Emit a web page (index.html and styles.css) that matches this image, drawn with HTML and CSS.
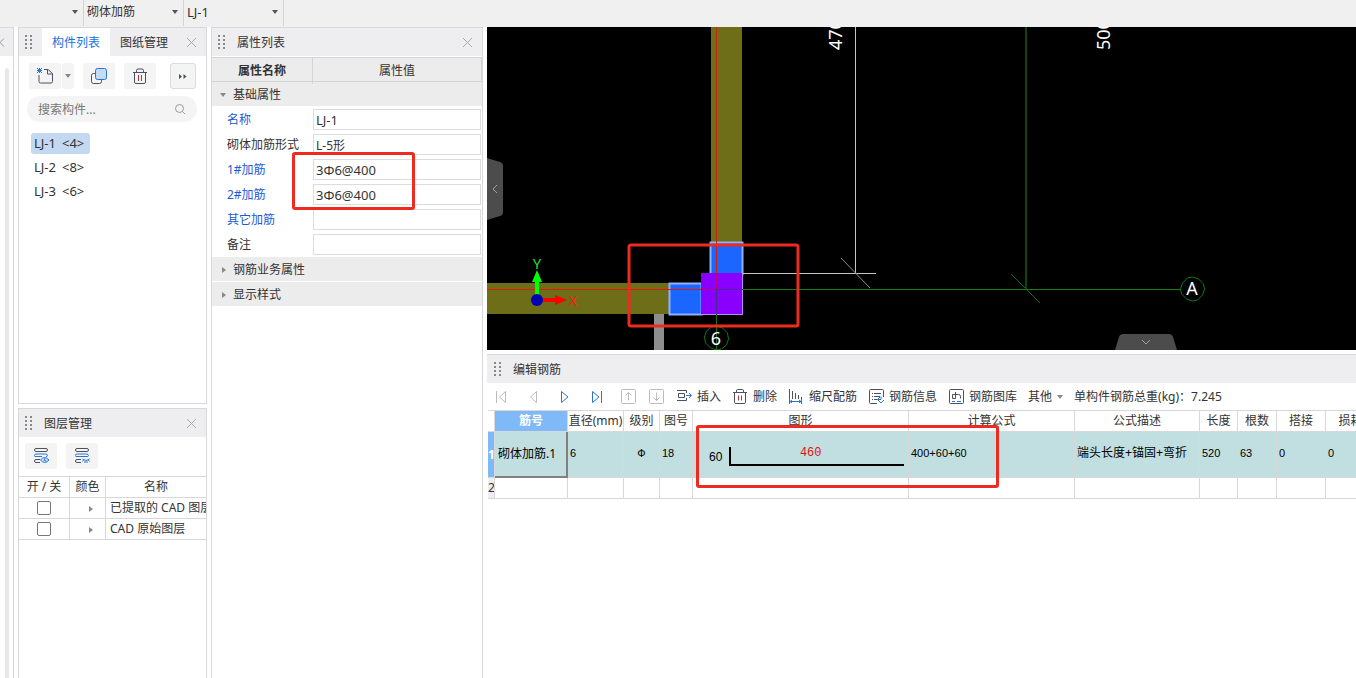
FILE: index.html
```html
<!DOCTYPE html>
<html lang="zh-CN">
<head>
    <meta charset="UTF-8">
    <meta name="viewport" content="width=device-width, initial-scale=1.0">
    <title>砌体加筋</title>
    <link rel="stylesheet" href="styles.css">
</head>
<body>
    <header class="topbar">
        <div class="picker"><select aria-label="楼层"><option></option></select></div>
        <div class="picker"><select aria-label="构件类型"><option>砌体加筋</option></select></div>
        <div class="picker"><select class="latin" aria-label="构件"><option>LJ-1</option></select></div>
    </header>

    <div class="workspace">
        <aside class="edge">
            <div class="edge-head">
                <svg width="5" height="9" viewBox="0 0 5 9"><path d="M-4 0.5L0 4.5L-4 8.5M4 0.5L0 4.5L4 8.5" /></svg>
            </div>
            <div class="edge-scroll"></div>
        </aside>

        <div class="side">
            <section class="panel components">
                <div class="panel-head">
                    <span class="grip"></span>
                    <button class="tab active" type="button">构件列表</button>
                    <button class="tab" type="button">图纸管理</button>
                    <button class="close" type="button" aria-label="关闭"></button>
                </div>
                <div class="component-tools">
                    <div class="split">
                        <button class="tool" type="button" aria-label="新建">
                            <svg width="18" height="18" viewBox="0 0 18 18"><path class="dark" d="M8 2.500h4l4.500 4v8q0 1.500-1.500 1.500h-10.500q-1.500 0-1.500-1.500V8M11.500 2.500V7h5" /><path class="blue" d="M1 1l5 5M6 1l-5 5M3.500 1v5M1 3.500h5" /></svg>
                        </button>
                        <button class="tool drop" type="button" aria-label="新建选项"><i class="caret"></i></button>
                    </div>
                    <button class="tool" type="button" aria-label="复制">
                        <svg width="18" height="18" viewBox="0 0 18 18"><rect class="dark" x="1.500" y="6.500" width="10" height="10" rx="2" /><rect class="blue fill" x="5.500" y="1.500" width="11" height="11" rx="2" /></svg>
                    </button>
                    <button class="tool" type="button" aria-label="删除">
                        <svg width="18" height="18" viewBox="0 0 18 18"><path class="dark" d="M2 5.500h14M5.500 5V3.500q0-1.500 1.500-1.500h4q1.500 0 1.500 1.500V5M3.500 6v9q0 1.500 1.500 1.500h8q1.500 0 1.500-1.500V6" /><path class="red" d="M7.500 8v6M10.500 8v6" /></svg>
                    </button>
                    <button class="tool more" type="button" aria-label="更多">
                        <svg width="10" height="8" viewBox="0 0 10 8"><path class="solid" d="M1 2l3 2.500-3 2.500zM5.500 2l3 2.500-3 2.500z" /></svg>
                    </button>
                </div>
                <div class="search">
                    <input type="text" placeholder="搜索构件..." aria-label="搜索构件">
                    <svg width="12" height="12" viewBox="0 0 12 12"><circle cx="5.500" cy="5.500" r="4" /><path d="M8.500 8.500l2.500 2.500" /></svg>
                </div>
                <ul class="component-list">
                    <li class="selected"><span>LJ-1</span> <span>&lt;4&gt;</span></li>
                    <li><span>LJ-2</span> <span>&lt;8&gt;</span></li>
                    <li><span>LJ-3</span> <span>&lt;6&gt;</span></li>
                </ul>
            </section>

            <section class="panel layers">
                <div class="panel-head">
                    <span class="grip"></span>
                    <h2>图层管理</h2>
                    <button class="close" type="button" aria-label="关闭"></button>
                </div>
                <div class="layer-tools">
                    <button class="tool" type="button" aria-label="显示图层">
                        <svg width="18" height="18" viewBox="0 0 18 18"><path class="dark" d="M4 1.500h10q1.500 0 1.500 1.500t-1.500 1.500H4Q2.500 4.500 2.500 3T4 1.500M8 12.500H4q-1.500 0-1.500 1.500t1.500 1.500h4" /><path class="blue" d="M14 9.500q1.500 0 1.500-1T14 7H4Q2.500 7 2.500 8.500T4 9.500h6" /><path class="blue fill" d="M8.500 13q4-5 8.500 0q-4.500 5-8.500 0z" /><path class="blue" d="M12.500 11.500v2h1.500" /></svg>
                    </button>
                    <button class="tool" type="button" aria-label="隐藏图层">
                        <svg width="18" height="18" viewBox="0 0 18 18"><path class="dark" d="M4 1.500h10q1.500 0 1.500 1.500t-1.500 1.500H4Q2.500 4.500 2.500 3T4 1.500M8 12.500H4q-1.500 0-1.500 1.500t1.500 1.500h4" /><path class="blue" d="M14 9.500q1.500 0 1.500-1T14 7H4Q2.500 7 2.500 8.500T4 9.500zM9.500 12q3.500 3 7 0M10.500 13l-1 1.500M12 14v2M14 14v2M15.500 13l1 1.500" /></svg>
                    </button>
                </div>
                <div class="layer-wrap">
                    <table class="layer-table">
                        <colgroup><col class="c-on"><col class="c-color"><col></colgroup>
                        <thead>
                            <tr><th>开 / 关</th><th>颜色</th><th>名称</th></tr>
                        </thead>
                        <tbody>
                            <tr>
                                <td><input type="checkbox" aria-label="已提取的 CAD 图层"></td>
                                <td><i class="caret right"></i></td>
                                <td>已提取的 CAD 图层</td>
                            </tr>
                            <tr>
                                <td><input type="checkbox" aria-label="CAD 原始图层"></td>
                                <td><i class="caret right"></i></td>
                                <td>CAD 原始图层</td>
                            </tr>
                        </tbody>
                    </table>
                </div>
            </section>
        </div>

        <section class="panel props">
            <div class="panel-head">
                <span class="grip"></span>
                <h2>属性列表</h2>
                <button class="close" type="button" aria-label="关闭"></button>
            </div>
            <div class="prop-titles"><strong>属性名称</strong><span>属性值</span></div>
            <div class="prop-group"><i class="caret"></i>基础属性</div>
            <div class="prop key"><label for="p-name">名称</label><input class="latin" type="text" id="p-name" value="LJ-1"></div>
            <div class="prop"><label for="p-shape">砌体加筋形式</label><input type="text" id="p-shape" value="L-5形"></div>
            <div class="prop key"><label for="p-bar1">1#加筋</label><input class="latin" type="text" id="p-bar1" value="3Φ6@400"></div>
            <div class="prop key"><label for="p-bar2">2#加筋</label><input class="latin" type="text" id="p-bar2" value="3Φ6@400"></div>
            <div class="prop key"><label for="p-other">其它加筋</label><input type="text" id="p-other"></div>
            <div class="prop"><label for="p-note">备注</label><input type="text" id="p-note"></div>
            <div class="prop-group"><i class="caret right"></i>钢筋业务属性</div>
            <div class="prop-group"><i class="caret right"></i>显示样式</div>
            <div class="mark mark-props"></div>
        </section>

        <main class="main">
            <div class="canvas">
                <svg class="drawing" width="100%" height="100%">
                    <!-- walls -->
                    <rect x="224" y="0" width="31" height="216" fill="#6f6e18" />
                    <rect x="0" y="256" width="183" height="31" fill="#6f6e18" />
                    <rect x="167" y="287" width="10" height="36" fill="#8e8e8e" />
                    <!-- column and reinforcement -->
                    <rect x="223.500" y="215.500" width="32" height="32" fill="#1a66ff" stroke="#8fb2ff" stroke-width="2" />
                    <rect x="182.500" y="256.500" width="32" height="31" fill="#1a66ff" stroke="#8fb2ff" stroke-width="2" />
                    <rect x="214" y="246" width="42" height="42" fill="#8a00ff" />
                    <path d="M255.500 246V287.500H214" fill="none" stroke="#b48cff" />
                    <!-- axes -->
                    <rect x="229" y="0" width="1" height="246" fill="#d02010" />
                    <rect x="0" y="262" width="214" height="1" fill="#e01808" />
                    <path d="M229.500 246V262.500H214" stroke="#b8007a" fill="none" />
                    <path d="M229.500 262V288M229 262.500H256" stroke="#4b2a90" fill="none" />
                    <rect x="256" y="262" width="437" height="1" fill="#148014" />
                    <path d="M229.500 288V323M524 247L553 276" stroke="#147014" fill="none" />
                    <path d="M539 0V262" stroke="#154015" stroke-width="2" />
                    <path d="M256 246.500H389M368.500 0V246" stroke="#c4c4c4" fill="none" />
                    <path d="M354 231L383 261" stroke="#8c8c8c" />
                    <path d="M229.500 299l6 2 5 5 1 6-2 6-5 4-5 1-6-2-5-5-1-6 2-6 5-4z" fill="none" stroke="#147814" />
                    <path d="M705.500 250l6 2 5 5 1 5-2 6-5 5-5 1-6-2-5-5-1-5 2-6 5-5z" fill="none" stroke="#147814" />
                    <text class="axis" x="229" y="318" text-anchor="middle">6</text>
                    <text class="axis" x="705" y="268" text-anchor="middle">A</text>
                    <text class="axis" transform="translate(355 23) rotate(-90)">4700</text>
                    <text class="axis" transform="translate(623 23) rotate(-90)">5000</text>
                    <!-- coordinate arrows -->
                    <path d="M50 270V254" stroke="#00ff00" stroke-width="4" />
                    <path d="M45 255L50 243L55 255z" fill="#00ff00" />
                    <path d="M54 273H69" stroke="#ff0000" stroke-width="4" />
                    <path d="M68 268L80 273L68 278z" fill="#ff0000" />
                    <circle cx="50" cy="273" r="6" fill="#0000b4" />
                    <text class="arrow-y" x="50" y="242" text-anchor="middle">Y</text>
                    <text class="arrow-x" x="86" y="279" text-anchor="middle">X</text>
                    <rect x="142" y="218" width="169" height="81" rx="2" fill="none" stroke="#ee2b20" stroke-width="3" />
                </svg>
                <button class="fold fold-left" type="button" aria-label="收起左侧">
                    <svg width="16" height="62" viewBox="0 0 16 62"><path d="M0 0L13 4Q16 5 16 8V54Q16 57 13 58L0 62z" fill="#4c4c4c" /><path d="M10 27L6 31L10 35" fill="none" stroke="#a0a0a0" /></svg>
                </button>
                <button class="fold fold-bottom" type="button" aria-label="收起下方">
                    <svg width="62" height="16" viewBox="0 0 62 16"><path d="M0 16L4 3Q5 0 8 0H54Q57 0 58 3L62 16z" fill="#4c4c4c" /><path d="M27 6L31 10L35 6" fill="none" stroke="#a0a0a0" /></svg>
                </button>
            </div>

            <section class="editor">
                <div class="panel-head">
                    <span class="grip"></span>
                    <h2>编辑钢筋</h2>
                </div>
                <div class="toolbar">
                    <div class="nav">
                        <button type="button" aria-label="首行"><svg width="16" height="16" viewBox="0 0 16 16"><path class="off" d="M3.500 2v12M12.500 2.500v11L6.500 8z" /></svg></button>
                        <button type="button" aria-label="上一行"><svg width="16" height="16" viewBox="0 0 16 16"><path class="off" d="M11.500 2.500v11L5.500 8z" /></svg></button>
                        <button type="button" aria-label="下一行"><svg width="16" height="16" viewBox="0 0 16 16"><path class="blue" d="M4.500 2.500v11L11 8z" /></svg></button>
                        <button type="button" aria-label="末行"><svg width="16" height="16" viewBox="0 0 16 16"><path class="blue" d="M3.500 2.500v11L10 8zM12.500 2v12" /></svg></button>
                    </div>
                    <button type="button" aria-label="上移"><svg width="16" height="16" viewBox="0 0 16 16"><rect class="off" x="1.500" y="0.500" width="14" height="14" rx="1" /><path class="off" d="M8.500 11.500v-8M5.500 6.500l3-3 3 3" /></svg></button>
                    <button type="button" aria-label="下移"><svg width="16" height="16" viewBox="0 0 16 16"><rect class="off" x="1.500" y="0.500" width="14" height="14" rx="1" /><path class="off" d="M8.500 3.500v8M5.500 8.500l3 3 3-3" /></svg></button>
                    <div class="actions">
                        <button type="button"><svg width="16" height="16" viewBox="0 0 16 16"><path class="dark" d="M10.500 4V1.500H1M1 11.500h9.500V9M8.500 4.500h-6v4h6z" /><path class="blue" d="M10 6.500h5M13 4l2.500 2.500-2.500 2.500" /></svg>插入</button>
                        <button type="button"><svg width="16" height="16" viewBox="0 0 16 16"><path class="dark" d="M1 3.500h14M4.500 3V2q0-1.500 1-1.500h5q1 0 1 1.500v1M2.500 4v9.500q0 1 1.500 1h8q1.500 0 1.500-1V4" /><path class="red" d="M6.500 6.500v5M9.500 6.500v5" /></svg>删除</button>
                        <button type="button"><svg width="16" height="16" viewBox="0 0 16 16"><path class="dark" d="M1.500 0v10M4.500 2v8M7.500 4v6M10.500 6v4M13.500 8v2" /><path class="blue" d="M1.500 10v5M13.500 10v5M2 12.500h11M4 11l-2 1.500 2 1.500M11 11l2 1.500-2 1.500" /></svg>缩尺配筋</button>
                        <button type="button"><svg width="16" height="16" viewBox="0 0 16 16"><path class="dark" d="M9 14.500H2.500q-1 0-1-1v-12q0-1 1-1h12q1 0 1 1V8M4 4.500h1M6 4.500h7M4 7.500h1M6 7.500h6M4 10.500h1M6 10.500h3" /><path class="blue" d="M13 7.500v3H9.500M12 8l-2.500 2.500L13 14l3-3" /></svg>钢筋信息</button>
                        <button type="button"><svg width="16" height="16" viewBox="0 0 16 16"><rect class="dark" x="1.500" y="0.500" width="14" height="14" rx="1" /><path class="dark" d="M7.500 3v6.500h-3v-4h3M7.500 5.500h3q2 0 2 2v2" /><path class="blue" d="M4 12.500h3M9 12.500h4" /></svg>钢筋图库</button>
                        <button type="button">其他<i class="caret"></i></button>
                        <span>单构件钢筋总重(kg)：7.245</span>
                    </div>
                </div>
                <div class="grid-wrap">
                    <table class="grid">
                        <colgroup>
                            <col class="g-index"><col class="g-name"><col class="g-dia"><col class="g-grade"><col class="g-no">
                            <col class="g-shape"><col class="g-formula"><col class="g-desc"><col class="g-len"><col class="g-count">
                            <col class="g-lap"><col class="g-loss">
                        </colgroup>
                        <thead>
                            <tr>
                                <th></th><th class="current">筋号</th><th>直径(mm)</th><th>级别</th><th>图号</th><th>图形</th>
                                <th>计算公式</th><th>公式描述</th><th>长度</th><th>根数</th><th>搭接</th><th>损耗</th>
                            </tr>
                        </thead>
                        <tbody>
                            <tr class="active">
                                <th scope="row">1</th>
                                <td class="focus">砌体加筋.1</td>
                                <td>6</td>
                                <td class="center">Ф</td>
                                <td>18</td>
                                <td class="shape">
                                    <div class="bar">
                                        <span>60</span>
                                        <div class="bar-line">460</div>
                                    </div>
                                </td>
                                <td>400+60+60</td>
                                <td class="desc">端头长度+锚固+弯折</td>
                                <td>520</td>
                                <td>63</td>
                                <td>0</td>
                                <td>0</td>
                            </tr>
                            <tr>
                                <th scope="row">2</th>
                                <td></td><td></td><td></td><td></td><td></td><td></td><td></td><td></td><td></td><td></td><td></td>
                            </tr>
                        </tbody>
                    </table>
                    <div class="mark mark-grid"></div>
                </div>
            </section>
        </main>
    </div>
</body>
</html>
```

FILE: styles.css
```css
* { box-sizing: border-box; }
body { margin: 0; height: 100vh; display: flex; flex-direction: column; overflow: hidden; background: #fff; color: #333; font: 12px/20px "Noto Sans", "Noto Sans CJK SC", sans-serif; }
button, input, select { font: inherit; color: inherit; margin: 0; padding: 0; border: 0; background: none; border-radius: 0; }
h2 { margin: 0; font-size: 12px; font-weight: 400; }
svg { display: block; flex: none; }
table { border-collapse: separate; border-spacing: 0; table-layout: fixed; }
th { font-weight: 400; }
.latin { font-size: 13px; }

/* icon strokes */
.dark, .blue, .red, .off { fill: none; stroke: #4a5160; }
.blue { stroke: #2a74d4; }
.red { stroke: #c03030; }
.off { stroke: #bcbcbc; }
.fill { fill: #c4dcf6; }
.solid { fill: #4a5160; }
.caret { display: inline-block; width: 0; height: 0; border: 3px solid transparent; border-top: 4px solid #888; border-bottom: 0; }
.caret.right { border: 3px solid transparent; border-left: 4px solid #888; border-right: 0; }

.topbar { display: flex; flex: none; height: 27px; background: #f0f0f0; }
.picker { position: relative; width: 100px; height: 26px; border-right: 1px solid #d4d4d4; }
.picker:first-child { width: 84px; }
.picker::after { content: ""; position: absolute; right: 5px; top: 10px; border: 3px solid transparent; border-top: 4px solid #555; border-bottom: 0; pointer-events: none; }
.picker select { appearance: none; width: 100%; height: 24px; padding-left: 3px; }

.workspace { flex: 1; display: flex; gap: 4px; min-height: 0; }
.edge { width: 14px; border: 1px solid #d8d8d8; border-left: 0; border-bottom: 0; display: flex; flex-direction: column; gap: 12px; }
.edge-head { height: 28px; background: #eeeef0; display: flex; align-items: center; }
.edge-head path { fill: none; stroke: #999; }
.edge-scroll { flex: 1; width: 4px; margin-left: 5px; background: #e8e8e8; border-radius: 2px 2px 0 0; }

.side { width: 189px; display: flex; flex-direction: column; gap: 4px; }
.panel { border: 1px solid #d8d8d8; background: #fff; overflow: hidden; }
.components { flex: 1 1 377px; }
.layers { flex: 1 1 270px; border-bottom: 0; }
.panel-head { display: flex; align-items: center; height: 28px; padding-left: 6px; background: #eeeef0; }
.panel-head h2 { margin-left: 12px; padding-top: 2px; }
.grip { width: 7px; height: 15px; background: radial-gradient(circle at 1px 1px, #888 1px, transparent 1px) 0 0 / 5px 4px; }
.tab { height: 28px; padding: 2px 10px 0 10px; }
.tab.active { background: #fff; color: #1a6fe0; }
.grip + .tab { margin-left: 10px; }
.close { position: relative; width: 9px; height: 9px; margin-left: auto; margin-right: 10px; background: linear-gradient(45deg, transparent 46%, #aaa 46%, #aaa 54%, transparent 54%), linear-gradient(-45deg, transparent 46%, #aaa 46%, #aaa 54%, transparent 54%); }

.tool { display: flex; align-items: center; justify-content: center; width: 32px; height: 26px; background: #f4f4f4; border-radius: 3px; }
.split { display: flex; gap: 1px; }
.tool.drop { width: 12px; }
.tool.more { width: 26px; margin-left: auto; border: 1px solid #dcdcdc; }
.component-tools { display: flex; gap: 9px; padding: 7px 10px 0 10px; }
.search { display: flex; align-items: center; height: 26px; margin: 7px 9px 0 8px; padding: 0 11px; background: #f4f4f4; border-radius: 13px; }
.search input { flex: 1; min-width: 0; padding-top: 2px; outline: none; }
.search input::placeholder { color: #777; }
.search svg { fill: none; stroke: #999; }
.component-list { list-style: none; margin: 11px 0 0 12px; padding: 0; display: flex; flex-direction: column; align-items: flex-start; gap: 3px; font-size: 13px; }
.component-list li { display: flex; gap: 6px; height: 21px; line-height: 21px; padding: 0 6px 0 3px; border-radius: 3px; }
.component-list .selected { background: #c2d9f1; }

.layer-tools { display: flex; gap: 9px; padding: 6px 6px 7px 6px; }
.layer-wrap { overflow: hidden; }
.layer-table { width: 100%; border-top: 1px solid #d8d8d8; }
.c-on { width: 51px; }
.c-color { width: 36px; }
.layer-table th, .layer-table td { height: 21px; padding: 0; border-right: 1px solid #d8d8d8; border-bottom: 1px solid #d8d8d8; text-align: center; white-space: nowrap; overflow: hidden; }
.layer-table th:last-child, .layer-table td:last-child { border-right: 0; }
.layer-table td:last-child { padding-left: 4px; text-align: left; }
.layer-table td:nth-child(2) { padding-left: 6px; }
.layer-table input { appearance: none; display: block; width: 14px; height: 14px; margin: 0 auto; border: 1px solid #777; border-radius: 2px; background: #fff; }

.props { position: relative; width: 272px; border-bottom: 0; }
.prop-titles { display: grid; grid-template-columns: 100px 1fr; height: 25px; margin-top: 1px; background: #ececec; border: 1px solid #d4d4d4; border-left: 0; text-align: center; line-height: 26px; }
.prop-titles span { border-left: 1px solid #d4d4d4; }
.prop-group { display: flex; align-items: center; height: 25px; padding: 2px 0 0 8px; background: #ececec; border-bottom: 1px solid #fff; }
.prop-group .caret { width: 6px; margin-right: 7px; }
.prop-group .caret.right { width: 4px; margin-left: 2px; }
.prop { display: grid; grid-template-columns: 101px 1fr; align-items: center; height: 25px; padding-right: 1px; }
.prop label { padding-left: 15px; white-space: nowrap; }
.prop.key label { color: #1c5ad4; }
.prop input { min-width: 0; height: 21px; padding: 0 2px; border: 1px solid #dcdcdc; }

/* red frames */
.mark { position: absolute; border: 3px solid #ee2b20; border-radius: 3px; pointer-events: none; }
.mark-props { left: 80px; top: 124px; width: 123px; height: 58px; }
.mark-grid { left: 208px; top: 15px; width: 303px; height: 63px; }

.main { flex: 1; min-width: 0; display: flex; flex-direction: column; gap: 4px; }
.canvas { position: relative; flex: 1 1 323px; min-height: 0; background: #000; overflow: hidden; }
.drawing { position: absolute; left: 0; top: 0; }
.axis { fill: #fff; font-size: 18px; }
.arrow-x, .arrow-y { font-size: 15px; fill: #f02010; }
.arrow-y { fill: #20e020; }
.fold { position: absolute; cursor: pointer; }
.fold-left { left: 0; top: 131px; }
.fold-bottom { right: 179px; bottom: 0; }

.editor { flex: 1 1 324px; min-height: 0; border-top: 1px solid #d8d8d8; overflow: hidden; }
.editor .panel-head { padding-left: 7px; }
.toolbar { display: flex; align-items: center; gap: 12px; height: 27px; padding: 1px 0 0 6px; white-space: nowrap; }
.nav { display: flex; gap: 16px; margin-right: 3px; }
.actions { display: flex; gap: 11px; }
.toolbar button { display: flex; align-items: center; gap: 5px; }
.grid-wrap { position: relative; margin-left: 1px; }
.grid { width: 888px; border-top: 1px solid #d8d8d8; }
.g-index { width: 7px; }
.g-name { width: 73px; }
.g-dia { width: 56px; }
.g-grade { width: 36px; }
.g-no { width: 33px; }
.g-shape { width: 216px; }
.g-formula { width: 166px; }
.g-desc { width: 125px; }
.g-len { width: 38px; }
.g-count { width: 39px; }
.g-lap { width: 49px; }
.g-loss { width: 50px; }
.grid th, .grid td { height: 21px; padding: 0; border-right: 1px solid #d8d8d8; border-bottom: 1px solid #d8d8d8; white-space: nowrap; overflow: hidden; }
.grid td { padding: 0 2px 3px 2px; color: #000; font-family: "Liberation Sans", "Noto Sans CJK SC", sans-serif; font-size: 11px; }
.grid tbody th { background: #eeeef0; }
.grid th.current, .grid .active th { background: #7fb9f7; color: #fff; font-weight: 700; }
.grid .active th, .grid .active td { height: 46px; }
.grid .active td { background: #c1dfe1; }
.grid .active .focus { padding: 0 0 0 3px; border-right: 2px solid #808080; border-bottom: 2px solid #808080; font: 12px/20px "Noto Sans", "Noto Sans CJK SC", sans-serif; }
.grid .center { text-align: center; }
.grid .desc { font-size: 12px; }
.grid .shape { padding: 4px 4px 0 16px; }
.bar { display: flex; align-items: center; gap: 7px; font-size: 12px; }
.bar-line { flex: 1; height: 19px; padding-right: 14px; border-left: 2px solid #000; border-bottom: 2px solid #000; color: #e01010; font: 12px/12px "Liberation Mono", monospace; text-align: center; }
```
